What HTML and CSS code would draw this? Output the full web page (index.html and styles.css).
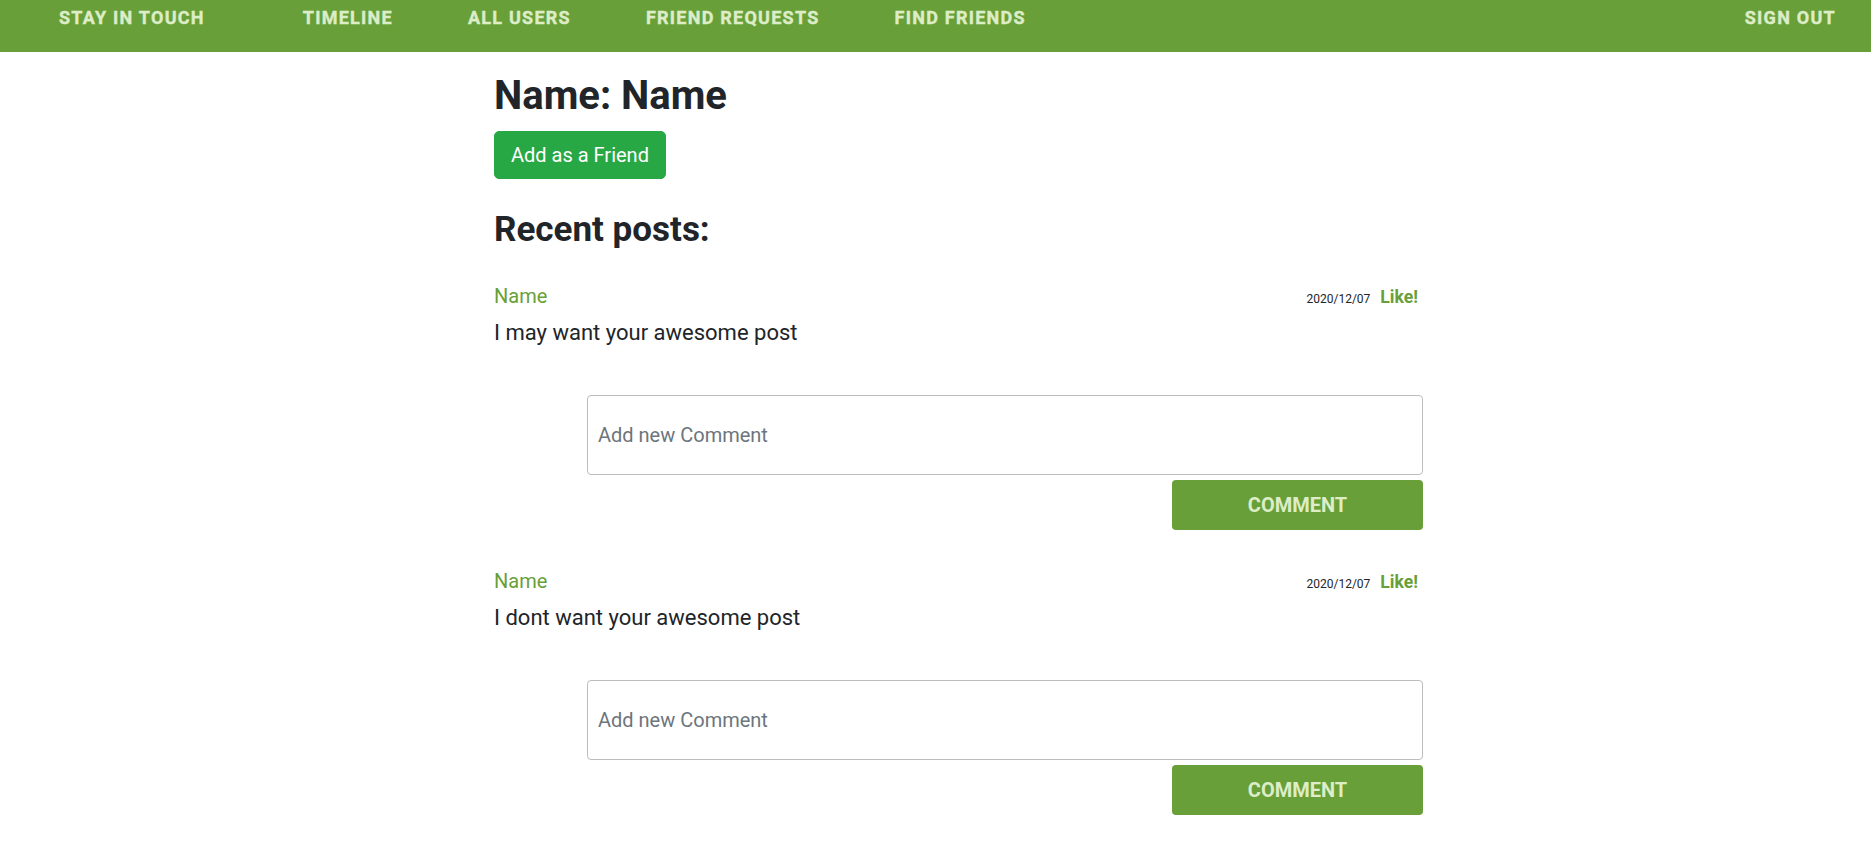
FILE: index.html
```html
<!DOCTYPE html>
<html lang="en">
<head>
<meta charset="utf-8">
<title>Stay in touch</title>
<link rel="stylesheet" href="styles.css">
</head>
<body>
<nav class="topbar">
  <a class="brand" href="#">Stay in touch</a>
  <div class="links">
    <a class="nav-link" href="#">Timeline</a>
    <a class="nav-link" href="#">All users</a>
    <a class="nav-link" href="#">Friend requests</a>
    <a class="nav-link" href="#">Find friends</a>
  </div>
  <a class="nav-link signout" href="#">Sign out</a>
</nav>
<main class="content">
  <h1 class="title">Name: Name</h1>
  <button class="btn-friend" type="button">Add as a Friend</button>
  <h2 class="subtitle">Recent posts:</h2>
  <section class="posts">
    <article class="post">
      <div class="post-head">
        <span class="author">Name</span>
        <span class="meta"><span class="date">2020/12/07</span><a class="like" href="#">Like!</a></span>
      </div>
      <p class="post-text">I may want your awesome post</p>
      <form class="comment-form">
        <input class="comment-input" type="text" placeholder="Add new Comment">
        <button class="btn-comment" type="button">Comment</button>
      </form>
    </article>
    <article class="post">
      <div class="post-head">
        <span class="author">Name</span>
        <span class="meta"><span class="date">2020/12/07</span><a class="like" href="#">Like!</a></span>
      </div>
      <p class="post-text">I dont want your awesome post</p>
      <form class="comment-form">
        <input class="comment-input" type="text" placeholder="Add new Comment">
        <button class="btn-comment" type="button">Comment</button>
      </form>
    </article>
  </section>
</main>
</body>
</html>
```
FILE: styles.css
```css
* { box-sizing: border-box; }
body {
  margin: 0;
  font-family: Roboto, "Liberation Sans", Arial, sans-serif;
  color: #212529;
  background: #fff;
}
.topbar {
  height: 52px;
  background: #689f38;
  display: flex;
  align-items: flex-start;
  padding: 5px 35px 0 59px;
}
.topbar a {
  color: #dcedc8;
  text-decoration: none;
  font-weight: 700;
  font-size: 18px;
  letter-spacing: 1.25px;
  -webkit-text-stroke: 0.4px #dcedc8;
  line-height: 26px;
  text-transform: uppercase;
}
.brand { margin-right: 98px; }
.links { display: flex; gap: 75px; }
.signout { margin-left: auto; }

.content {
  margin-left: 494px;
  width: 929px;
}
.title {
  font-size: 40px;
  line-height: 1.2;
  font-weight: 700;
  margin: 20px 0 11px;
}
.btn-friend {
  font-family: inherit;
  font-size: 20px;
  line-height: 30px;
  padding: 8px 16px;
  color: #fff;
  background: #28a745;
  border: 1px solid #28a745;
  border-radius: 5px;
  display: block;
}
.subtitle {
  font-size: 35px;
  line-height: 1.2;
  font-weight: 700;
  margin: 30px 0 30px;
}
.post { padding-bottom: 36px; }
.post-head {
  display: flex;
  justify-content: space-between;
  align-items: baseline;
  height: 30px;
  line-height: 30px;
}
.author { color: #689f38; font-size: 20px; }
.meta {
  display: flex;
  align-items: baseline;
  gap: 10px;
  padding-right: 5px;
  line-height: 1;
}
.date { font-size: 12px; }
.like {
  color: #689f38;
  font-weight: 700;
  font-size: 17.6px;
  text-decoration: none;
}
.post-text {
  font-size: 22px;
  line-height: 33px;
  margin: 5px 0 0;
}
.comment-form {
  margin: 46px 0 0 93px;
  display: flex;
  flex-direction: column;
  align-items: flex-end;
  gap: 5px;
}
.comment-input {
  width: 836px;
  height: 80px;
  border: 1px solid #bdbdbd;
  border-radius: 4px;
  padding: 0 10px;
  font-family: inherit;
  font-size: 20px;
  color: #495057;
}
.comment-input::placeholder { color: #6c757d; }
.btn-comment {
  width: 251px;
  height: 50px;
  background: #689f38;
  color: #dcedc8;
  border: none;
  border-radius: 4px;
  font-family: inherit;
  font-weight: 700;
  font-size: 20px;
  text-transform: uppercase;
}
```
